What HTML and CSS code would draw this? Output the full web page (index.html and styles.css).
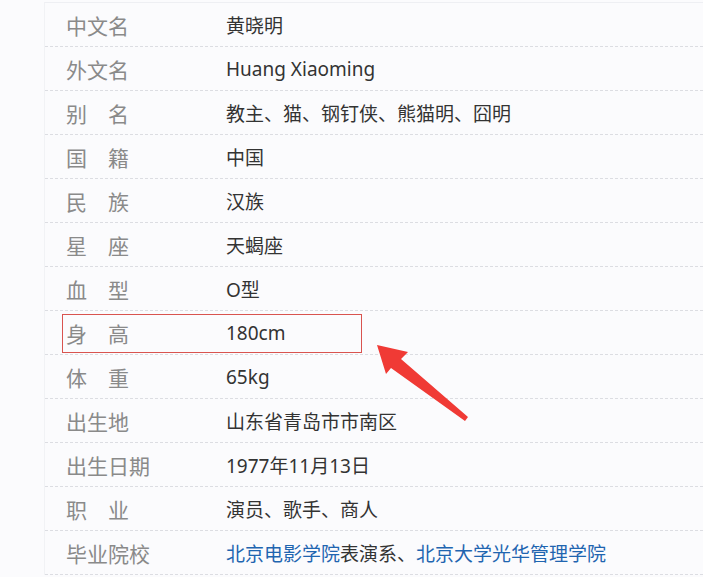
FILE: index.html
```html
<!DOCTYPE html>
<html lang="zh-CN">
  <head>
    <meta charset="UTF-8" />
    <title>黄晓明</title>
    <link rel="stylesheet" href="styles.css">
  </head>
  <body>
    <dl class="info">
      <div class="row"><dt>中文名</dt><dd>黄晓明</dd></div>
      <div class="row"><dt>外文名</dt><dd>Huang Xiaoming</dd></div>
      <div class="row"><dt>别名</dt><dd>教主、猫、钢钉侠、熊猫明、囧明</dd></div>
      <div class="row"><dt>国籍</dt><dd>中国</dd></div>
      <div class="row"><dt>民族</dt><dd>汉族</dd></div>
      <div class="row"><dt>星座</dt><dd>天蝎座</dd></div>
      <div class="row"><dt>血型</dt><dd>O型</dd></div>
      <div class="row marked"><dt>身高</dt><dd>180cm</dd><span class="mark"></span></div>
      <div class="row"><dt>体重</dt><dd>65kg</dd></div>
      <div class="row"><dt>出生地</dt><dd>山东省青岛市市南区</dd></div>
      <div class="row"><dt>出生日期</dt><dd>1977年11月13日</dd></div>
      <div class="row"><dt>职业</dt><dd>演员、歌手、商人</dd></div>
      <div class="row"><dt>毕业院校</dt><dd><a href="#">北京电影学院</a>表演系、<a href="#">北京大学光华管理学院</a></dd></div>
    </dl>

    <svg class="arrow" width="120" height="100" viewBox="0 0 120 100">
      <path d="M2 2 L33 9 L26 16 L93 74 L90 78 L16 25 L11 31 Z" fill="#f03a35" />
    </svg>
  </body>
</html>
```

FILE: styles.css
```css
body {
  margin: 0;
  background-color: #fbfbfd;
  font-family: "Noto Sans", "Noto Sans CJK SC", sans-serif;
  position: relative;
  height: 577px;
  overflow: hidden;
}

.info {
  margin: 2px 0 0 44px;
  border-top: 1px solid #eeeff3;
  border-left: 1px solid #f1f2f5;
}

.row {
  position: relative;
  display: grid;
  grid-template-columns: 160px 1fr;
  align-items: center;
  height: 43px;
  border-bottom: 1px dashed #dcdde2;
}

dt {
  justify-self: start;
  width: 63px;
  margin-left: 21px;
  color: #8a8a8a;
  font-size: 21px;
  white-space: nowrap;
  text-align: justify;
  text-align-last: justify;
}

dd {
  margin-left: 21px;
  color: #333;
  font-size: 19px;
  white-space: nowrap;
}

dd a {
  color: #1f65b0;
  text-decoration: none;
}

.mark {
  position: absolute;
  left: 17px;
  top: 3px;
  width: 298px;
  height: 37px;
  border: 1px solid #d9534f;
}

.arrow {
  position: absolute;
  left: 375px;
  top: 343px;
}
```
